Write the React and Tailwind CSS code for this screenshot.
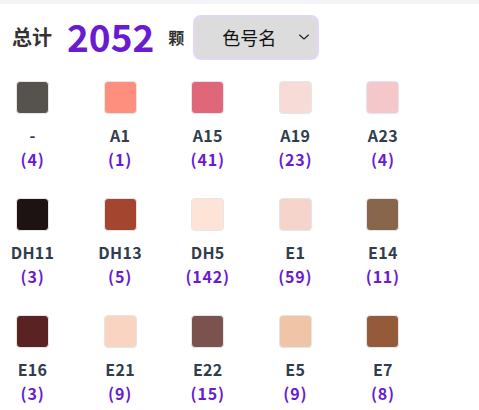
const colors = [
  { code: '-', hex: '#56524d', count: 4 },
  { code: 'A1', hex: '#fe8e7d', count: 1 },
  { code: 'A15', hex: '#e0677a', count: 41 },
  { code: 'A19', hex: '#f6dbd6', count: 23 },
  { code: 'A23', hex: '#f4c8ca', count: 4 },
  { code: 'DH11', hex: '#1d1313', count: 3 },
  { code: 'DH13', hex: '#a3452f', count: 5 },
  { code: 'DH5', hex: '#fee3d7', count: 142 },
  { code: 'E1', hex: '#f5d4cc', count: 59 },
  { code: 'E14', hex: '#88664b', count: 11 },
  { code: 'E16', hex: '#5a2223', count: 3 },
  { code: 'E21', hex: '#f9d5c1', count: 9 },
  { code: 'E22', hex: '#7a534e', count: 15 },
  { code: 'E5', hex: '#f0c4a6', count: 9 },
  { code: 'E7', hex: '#955a3a', count: 8 },
];

function Swatch({ code, hex, count }) {
  return (
    <div className="flex flex-col items-center">
      <div
        className="w-[33px] h-[33px] rounded-[4px] border border-[#e6e6e6]"
        style={{ backgroundColor: hex }}
      />
      <div className="mt-[9px] text-[16px] leading-[24px] font-bold tracking-[0.3px] text-[#2f3d4f]">{code}</div>
      <div className="text-[16px] leading-[25px] font-bold tracking-[0.8px] text-[#6a1bd0]">({count})</div>
    </div>
  );
}

export default function App() {
  return (
    <div className="w-[479px] h-[410px] bg-white overflow-hidden font-['Noto_Sans_CJK_SC',sans-serif]">
      <div className="h-[4px] bg-[#f3f4f6]" />
      <div className="flex items-center h-[65px] pl-3 pt-[1px]">
        <span className="text-[20px] font-bold text-[#333]">总计</span>
        <span className="ml-[15px] text-[37px] leading-none font-bold text-[#6a1bd0] -translate-y-[1px]">2052</span>
        <span className="ml-[14px] text-[16px] font-bold text-[#333]">颗</span>
        <div className="ml-[9px] w-[126px] h-[45px] rounded-[8px] border-2 border-[#e3d6f7] bg-[#dcdcdc] flex items-center pl-[27px] pr-[7px]">
          <span className="text-[18px] text-[#111]">色号名</span>
          <svg className="ml-auto" width="12" height="8" viewBox="0 0 12 8" fill="none">
            <path d="M1.5 2 L6 6 L10.5 2" stroke="#222" strokeWidth="1.1" strokeLinecap="round" strokeLinejoin="round" />
          </svg>
        </div>
      </div>
      <div className="mt-[12px] grid grid-cols-[repeat(5,65px)] gap-x-[22.6px] gap-y-[26px]">
        {colors.map((c) => (
          <Swatch key={c.code} {...c} />
        ))}
      </div>
    </div>
  );
}
